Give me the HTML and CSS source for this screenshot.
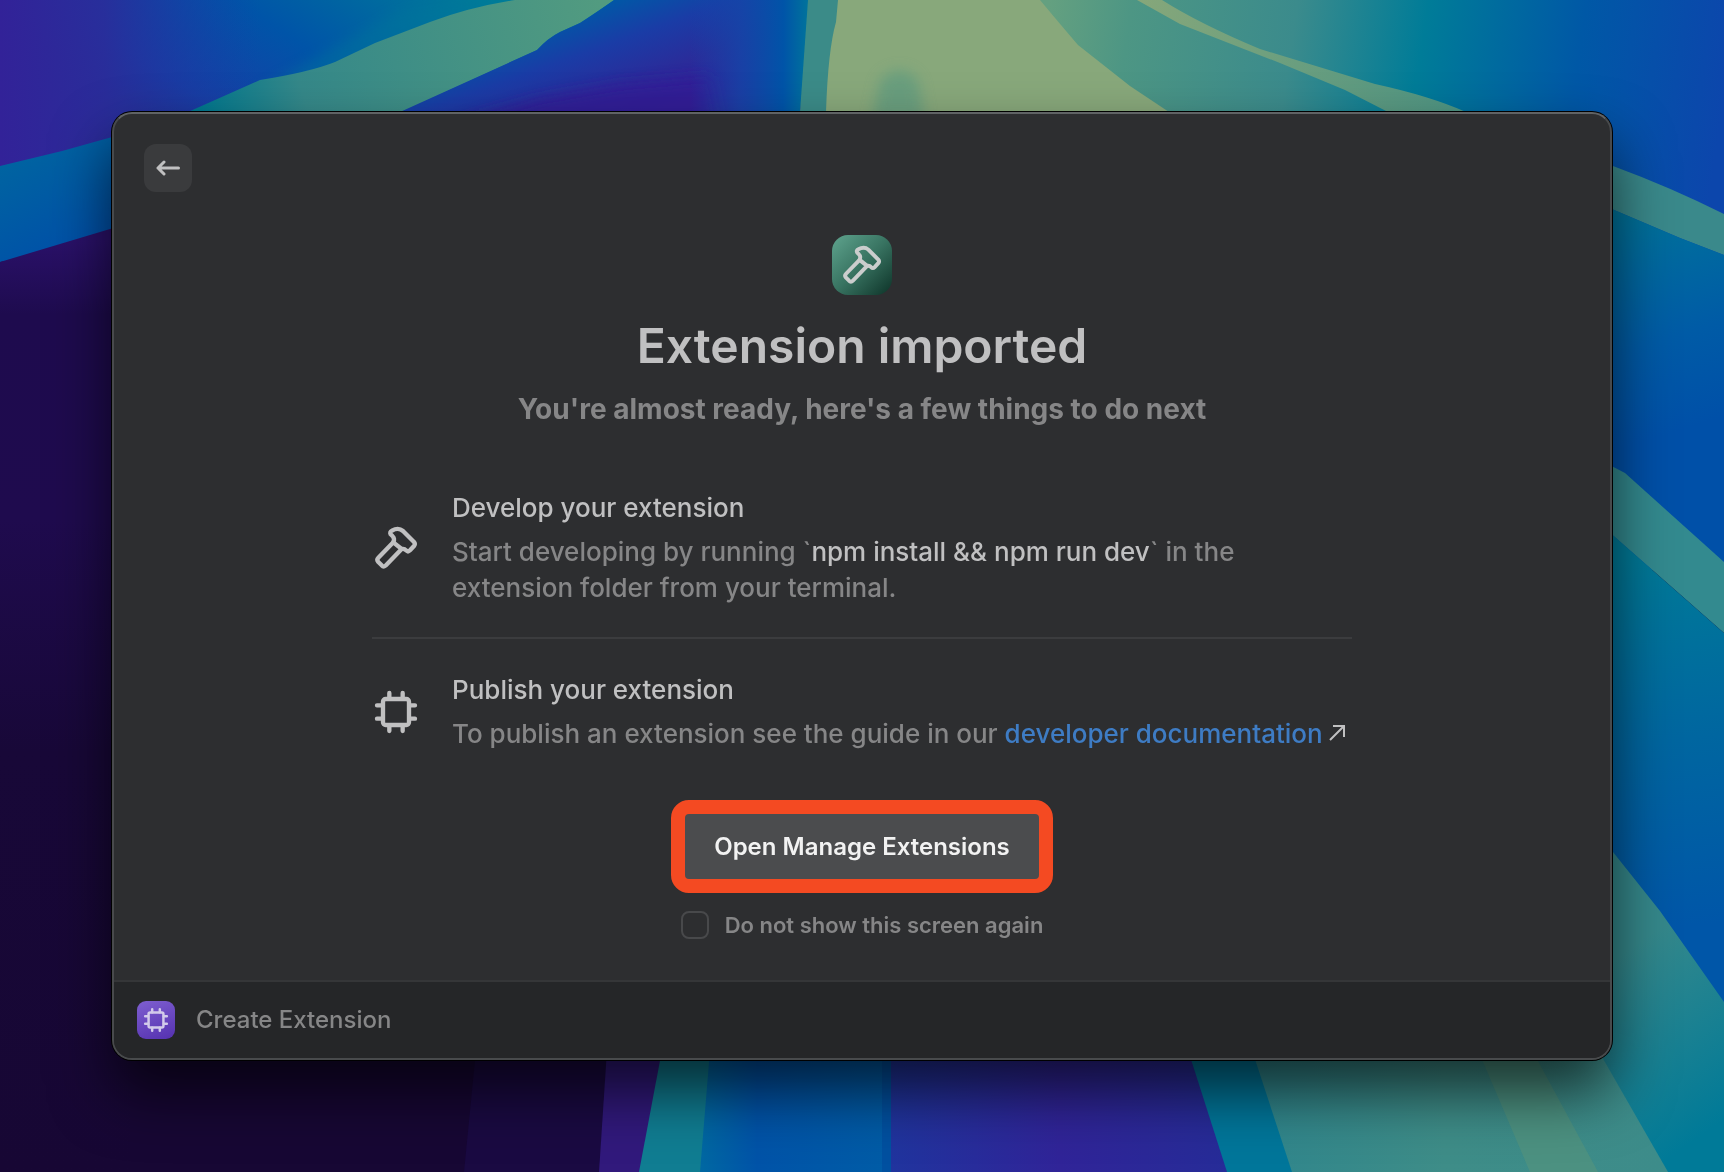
FILE: index.html
```html
<!DOCTYPE html>
<html lang="en">
<head>
<meta charset="utf-8">
<title>Extension imported</title>
<link rel="stylesheet" href="styles.css">
</head>
<body>
<svg class="wallpaper" viewBox="0 0 1724 1172" preserveAspectRatio="xMidYMid slice" aria-hidden="true">
  <defs>
    <linearGradient id="sky-left" gradientUnits="userSpaceOnUse" x1="100" y1="170" x2="300" y2="-130"><stop offset="0" stop-color="#322298"/><stop offset=".2" stop-color="#253098"/><stop offset=".32" stop-color="#173fa6"/><stop offset=".6" stop-color="#0054a8"/><stop offset="1" stop-color="#007c98"/></linearGradient>
    <linearGradient id="sky-corner" gradientUnits="userSpaceOnUse" x1="0" y1="0" x2="260" y2="0"><stop offset="0" stop-color="#322298"/><stop offset=".4" stop-color="#2a2c9a" stop-opacity=".9"/><stop offset="1" stop-color="#1042a6" stop-opacity="0"/></linearGradient>
    <linearGradient id="band-left" gradientUnits="userSpaceOnUse" x1="200" y1="111" x2="600" y2="0"><stop offset="0" stop-color="#00788f"/><stop offset=".25" stop-color="#358889"/><stop offset="1" stop-color="#529b80"/></linearGradient>
    <linearGradient id="violet" gradientUnits="userSpaceOnUse" x1="610" y1="0" x2="650" y2="112"><stop offset="0" stop-color="#0058a6"/><stop offset=".35" stop-color="#1a3ca6"/><stop offset=".7" stop-color="#2a2c9a"/><stop offset="1" stop-color="#322298"/></linearGradient>
    <linearGradient id="violet-edge" x1="0" x2="1" y1="0" y2="0"><stop offset="0" stop-color="#1446a8" stop-opacity="0"/><stop offset=".4" stop-color="#1446a8" stop-opacity=".8"/><stop offset=".75" stop-color="#0054a8"/><stop offset="1" stop-color="#007c98"/></linearGradient>
    <linearGradient id="right-top" gradientUnits="userSpaceOnUse" x1="1050" y1="0" x2="1724" y2="100"><stop offset="0" stop-color="#64a080"/><stop offset=".12" stop-color="#4d9684"/><stop offset=".36" stop-color="#3b8b8c"/><stop offset=".55" stop-color="#007c98"/><stop offset=".78" stop-color="#0058a6"/><stop offset="1" stop-color="#0c46ac"/></linearGradient>
    <linearGradient id="vein" gradientUnits="userSpaceOnUse" x1="1137" y1="0" x2="1466" y2="111"><stop offset="0" stop-color="#86a77a"/><stop offset="1" stop-color="#4d9584"/></linearGradient>
    <linearGradient id="blue-left" gradientUnits="userSpaceOnUse" x1="0" y1="150" x2="60" y2="260"><stop offset="0" stop-color="#0066a0"/><stop offset="1" stop-color="#0050a8"/></linearGradient>
    <linearGradient id="dark" gradientUnits="userSpaceOnUse" x1="0" y1="240" x2="0" y2="1172"><stop offset="0" stop-color="#2a1169"/><stop offset=".08" stop-color="#1e0b4e"/><stop offset=".3" stop-color="#1f0b4e"/><stop offset=".55" stop-color="#180838"/><stop offset="1" stop-color="#170734"/></linearGradient>
    <linearGradient id="right-1" gradientUnits="userSpaceOnUse" x1="1613" y1="210" x2="1680" y2="430"><stop offset="0" stop-color="#00749a"/><stop offset=".6" stop-color="#005ba6"/><stop offset="1" stop-color="#0050a8"/></linearGradient>
    <linearGradient id="right-2" gradientUnits="userSpaceOnUse" x1="1613" y1="560" x2="1660" y2="930"><stop offset="0" stop-color="#007a98"/><stop offset=".5" stop-color="#0066a0"/><stop offset="1" stop-color="#0056a8"/></linearGradient>
    <linearGradient id="right-3" gradientUnits="userSpaceOnUse" x1="1613" y1="960" x2="1724" y2="1120"><stop offset="0" stop-color="#35888b"/><stop offset="1" stop-color="#007a98"/></linearGradient>
    <linearGradient id="bottom-green" gradientUnits="userSpaceOnUse" x1="1260" y1="0" x2="1668" y2="0"><stop offset="0" stop-color="#30868c"/><stop offset=".45" stop-color="#3e8d88"/><stop offset="1" stop-color="#3d8c8a"/></linearGradient>
    <linearGradient id="bottom-blue" gradientUnits="userSpaceOnUse" x1="700" y1="0" x2="890" y2="0"><stop offset="0" stop-color="#0068a2"/><stop offset=".3" stop-color="#0053a8"/><stop offset="1" stop-color="#005ca6"/></linearGradient>
    <linearGradient id="bottom-indigo" gradientUnits="userSpaceOnUse" x1="890" y1="0" x2="1230" y2="0"><stop offset="0" stop-color="#20349e"/><stop offset=".5" stop-color="#302498"/><stop offset="1" stop-color="#262c98"/></linearGradient>
    <filter id="soft" x="-30%" y="-60%" width="160%" height="220%"><feGaussianBlur stdDeviation="7"/></filter>
  </defs>
  <rect width="1724" height="1172" fill="#170734"/>
  <path fill="url(#sky-left)" d="M0 0H620V240H0z"/>
  <path fill="url(#sky-corner)" d="M0 0H260V240H0z"/>
  <path fill="#007c98" opacity=".4" filter="url(#soft)" d="M260 90L330 50L400 10L520 -10L500 20L380 60L250 100z"/>
  <path fill="url(#blue-left)" d="M0 166L62 151L130 132V240L0 262z"/>
  <path fill="url(#dark)" d="M0 262L60 244L130 223V1172H0z"/>
  <path fill="url(#band-left)" d="M515 0Q470 7 430 22L375 43L335 62Q310 72 260 80L188 112H402L537 50Q548 38 560 32L580 23Q600 10 614 0z"/>
  <path fill="url(#violet)" d="M614 0Q600 10 580 23L560 32Q548 38 537 50L400 112H820V0z"/>
  <path filter="url(#soft)" fill="#331c96" opacity=".8" d="M450 124L540 98L620 84L712 76L722 124z"/>
  <path fill="url(#violet-edge)" d="M690 0H815L800 112H690z"/>
  <path fill="#3b8b88" d="M808 0H842L830 112H800z"/>
  <path fill="url(#right-top)" d="M1000 0H1724V300H1000z"/>
  <path fill="#88a87b" d="M838 0H1040Q1060 24 1078 45L1130 86L1169 112H826Q828 50 836 22z"/>
  <path filter="url(#soft)" fill="#5a9a80" opacity=".65" d="M872 120L880 80Q900 60 918 80L925 120z"/>
  <path fill="url(#vein)" d="M1137 0H1162Q1200 24 1260 49L1375 84Q1430 96 1466 112H1388L1345 90L1280 63L1180 24z"/>
  <path fill="#3a898b" d="M1600 160L1613 166Q1670 187 1724 214V255L1680 238L1600 204z"/>
  <path fill="url(#right-1)" d="M1600 204L1680 238L1724 255V570H1600z"/>
  <path fill="#338a8f" d="M1600 460L1625 473L1724 562V633L1600 524z"/>
  <path fill="url(#right-2)" d="M1600 524L1724 633V1010H1600z"/>
  <path fill="url(#right-3)" d="M1590 820L1613 852L1660 911L1724 1002V1172H1590z"/>
  <path fill="#1a0a42" d="M476 1050H610V1172H464z"/>
  <path fill="#31197c" d="M607 1050H665V1172H599z"/>
  <path fill="#107d92" d="M662 1050H720V1172H639z"/>
  <path fill="url(#bottom-blue)" d="M710 1050H900V1172H700z"/>
  <path fill="#0050a0" d="M882 1050H891V1172H882z"/>
  <path fill="url(#bottom-indigo)" d="M891 1050H1200L1230 1172H891z"/>
  <path fill="#00769a" d="M1188 1050H1260L1300 1172H1227z"/>
  <path fill="url(#bottom-green)" d="M1252 1050H1598L1668 1172H1292z"/>
  <path fill="#509280" opacity=".8" d="M1478 1050H1532L1598 1172H1530z"/>
</svg>

<div class="window">
  <main class="main">
    <button class="back" type="button" aria-label="Back">
      <svg class="back-icon" viewBox="0 0 24 16"><path d="M22.500 8H2M8 2L2 8l6 6"/></svg>
    </button>
    <header class="intro">
      <span class="badge badge-large"><svg class="glyph glyph-badge" viewBox="0 0 126 126"><use href="#hammer"/></svg></span>
      <h1 class="title">Extension imported</h1>
      <p class="subtitle">You're almost ready, here's a few things to do next</p>
    </header>
    <ul class="steps">
      <li class="step">
        <svg class="glyph" viewBox="0 0 126 126" aria-hidden="true">
          <g id="hammer">
            <path d="M55 46L10 92Q4 98 10 105L20 115Q26 122 33 115L80 66z"/>
            <path d="M55 46Q60 34 53 28L47 22Q43 15 51 11Q70 0 84 12L117 45Q122 51 117 57L105 70Q99 76 93 70Q88 64 80 66"/>
          </g>
        </svg>
        <div class="step-text">
          <h2 class="step-title">Develop your extension</h2>
          <p class="step-desc">Start developing by running `<strong class="command">npm install &amp;&amp; npm run dev</strong>` in the<br>extension folder from your terminal.</p>
        </div>
      </li>
      <li class="step">
        <svg class="glyph" viewBox="0 0 126 126" aria-hidden="true">
          <g id="chip">
            <rect x="24" y="24" width="78" height="78" rx="8"/>
            <path d="M43 6V22M83 6V22M43 104V120M83 104V120M6 43H22M6 83H22M104 43H120M104 83H120"/>
          </g>
        </svg>
        <div class="step-text">
          <h2 class="step-title">Publish your extension</h2>
          <p class="step-desc">To publish an extension see the guide in our <a class="link" href="#docs">developer documentation<svg class="link-icon" viewBox="0 0 16 16" aria-hidden="true"><path d="M1 15L15 1M4 1H15V12"/></svg></a></p>
        </div>
      </li>
    </ul>
    <button class="primary" type="button">Open Manage Extensions</button>
    <label class="optout"><input class="checkbox" type="checkbox">Do not show this screen again</label>
  </main>
  <footer class="footer">
    <span class="badge badge-small"><svg class="glyph glyph-small" viewBox="0 0 126 126"><use href="#chip"/></svg></span>
    <span>Create Extension</span>
  </footer>
</div>
</body>
</html>
```
FILE: styles.css
```css
* { box-sizing: border-box; }

body {
  margin: 0;
  min-height: 100vh;
  padding: 112px;
  display: flex;
  background: #170734;
  color: #c0c0c1;
  font-family: Inter, sans-serif;
}

h1, h2, p, ul { margin: 0; padding: 0; }

button {
  font: inherit;
  border: 0;
  padding: 0;
  cursor: pointer;
}

.wallpaper {
  position: fixed;
  inset: 0;
  width: 100%;
  height: 100%;
  z-index: -1;
}

.window {
  flex: 1;
  display: flex;
  flex-direction: column;
  border: 2px solid #484a4c;
  border-top-color: #606365;
  border-radius: 20px;
  background: #2d2e30;
  box-shadow: 0 0 0 1px #000, 0 32px 60px rgba(0, 0, 0, 0.65);
}

.main {
  flex: 1;
  display: flex;
  flex-direction: column;
  align-items: center;
  padding: 30px 30px 40px;
}

.back {
  align-self: flex-start;
  display: grid;
  place-items: center;
  width: 48px;
  height: 48px;
  border-radius: 12px;
  background: #3a3b3d;
}

.back-icon {
  width: 24px;
  height: 16px;
  fill: none;
  stroke: #c0c0c1;
  stroke-width: 3;
  stroke-linecap: round;
  stroke-linejoin: round;
}

.intro {
  display: flex;
  flex-direction: column;
  align-items: center;
  margin-top: 43px;
  text-align: center;
}

.badge {
  display: grid;
  place-items: center;
}

.badge-large {
  width: 60px;
  height: 60px;
  border-radius: 16px;
  background: linear-gradient(135deg, #5fa48e, #387361 50%, #0d3328);
}

.badge-small {
  width: 38px;
  height: 38px;
  border-radius: 9px;
  background: linear-gradient(160deg, #7e5fd0, #5531b0);
}

.glyph {
  width: 42px;
  height: 42px;
  fill: none;
  stroke: #c0c0c1;
  stroke-width: 13;
  stroke-linecap: round;
  stroke-linejoin: round;
  overflow: visible;
}

.glyph-badge {
  width: 38px;
  height: 38px;
  stroke: #cbcdcd;
}

.glyph-small {
  width: 24px;
  height: 24px;
  stroke: #d2caea;
}

.title {
  margin-top: 23px;
  font-size: 48px;
  line-height: 56px;
  font-weight: 600;
}

.subtitle {
  margin-top: 17px;
  font-size: 28px;
  line-height: 36px;
  font-weight: 700;
  color: #868687;
}

.steps {
  width: 100%;
  max-width: 980px;
  margin-top: 63px;
  list-style: none;
}

.step {
  display: flex;
  align-items: center;
  gap: 35px;
  padding-left: 3px;
}

.step + .step {
  margin-top: 31px;
  padding-top: 33px;
  border-top: 2px solid #3b3c3e;
}

.step-title, .step-desc {
  font-size: 26px;
  line-height: 36px;
  font-weight: 500;
}

.step-desc {
  margin-top: 8px;
  color: #868687;
}

.command {
  font-weight: 500;
  color: #c0c0c1;
}

.link {
  color: #3e7cc4;
  text-decoration: none;
}

.link-icon {
  width: 16px;
  height: 16px;
  margin-left: 6px;
  vertical-align: 2px;
  fill: none;
  stroke: #c0c0c1;
  stroke-width: 2;
}

.primary {
  margin-top: 48px;
  padding: 0 29px;
  border: 14px solid #f44a22;
  border-radius: 18px;
  background: #4b4c4e;
  color: #f2f2f2;
  font-size: 24px;
  line-height: 65px;
  font-weight: 600;
}

.optout {
  display: flex;
  align-items: center;
  gap: 16px;
  margin-top: 18px;
  font-size: 22px;
  line-height: 28px;
  font-weight: 600;
  color: #868687;
}

.checkbox {
  appearance: none;
  width: 28px;
  height: 28px;
  margin: 0;
  border: 2px solid #48494b;
  border-radius: 8px;
}

.footer {
  display: flex;
  align-items: center;
  gap: 21px;
  height: 78px;
  padding: 0 23px;
  border-top: 2px solid #353638;
  border-radius: 0 0 18px 18px;
  background: #252628;
  color: #868687;
  font-size: 24px;
  line-height: 32px;
  font-weight: 500;
}
```
